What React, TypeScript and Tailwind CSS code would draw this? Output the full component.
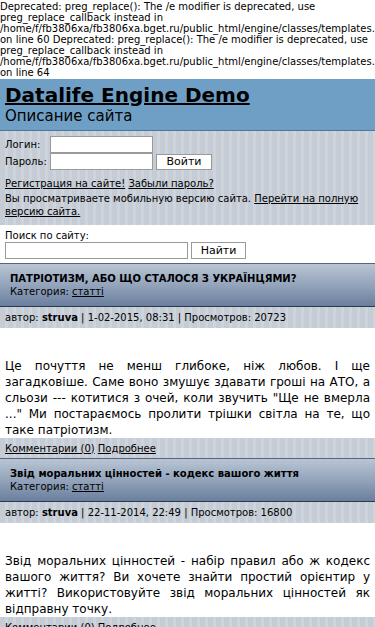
import React from "react";

const stripes =
  "bg-[repeating-linear-gradient(90deg,#c5ccd5_0px,#c5ccd5_5px,#ced4dc_5px,#ced4dc_8px)]";

function Article(props: {
  title: string;
  date: string;
  views: string;
  text: string;
}) {
  return (
    <div>
      <div className="border-t border-[#56657a] border-b border-b-[#2c3747] bg-[linear-gradient(180deg,#b9c5d4_0%,#8fa0b8_55%,#6a7f9e_100%)] px-[10px] pt-[8px] pb-[8px]">
        <div className="text-[10px] leading-[13px] font-bold">{props.title}</div>
        <div className="text-[10px] leading-[13px]">
          Категория: <a className="underline">статті</a>
        </div>
      </div>
      <div className={`${stripes} px-[5px] h-[21px] flex items-center text-[10px]`}>
        <span>
          автор: <b>struva</b> | {props.date} | Просмотров: {props.views}
        </span>
      </div>
      <div className="bg-white px-[5px] pt-[30px] pb-0">
        <p className="text-[12px] leading-[16px] text-justify">{props.text}</p>
      </div>
      <div className={`${stripes} px-[5px] h-[20px] flex items-center text-[10px]`}>
        <a className="underline">Комментарии (0)</a>
        <span>&nbsp;</span>
        <a className="underline">Подробнее</a>
      </div>
    </div>
  );
}

export default function App() {
  return (
    <div className="w-[375px] h-[627px] overflow-hidden bg-white text-black font-['DejaVu_Sans',sans-serif]">
      <div className="text-[10px] leading-[11px] whitespace-normal pt-[1px]">
        Deprecated: preg_replace(): The /e modifier is deprecated, use preg_replace_callback instead in /home/f/fb3806xa/fb3806xa.bget.ru/public_html/engine/classes/templates.class.php on line 60 Deprecated: preg_replace(): The /e modifier is deprecated, use preg_replace_callback instead in /home/f/fb3806xa/fb3806xa.bget.ru/public_html/engine/classes/templates.class.php on line 64
      </div>
      <div className="bg-[#6f9fc5] border-b border-[#4b789c] px-[5px] pt-[4px] pb-[4px] mt-[1px]">
        <div className="text-[20px] leading-[24px] font-bold underline">Datalife Engine Demo</div>
        <div className="text-[15px] leading-[19px]">Описание сайта</div>
      </div>
      <div className={`${stripes} px-[5px] pt-[5px] pb-[7px] text-[10px]`}>
        <div className="flex items-center h-[17px]">
          <span className="w-[45px]">Логин:</span>
          <input className="w-[103px] h-[17px] bg-white border border-[#9a9a9a]" />
        </div>
        <div className="flex items-center h-[17px]">
          <span className="w-[45px]">Пароль:</span>
          <input className="w-[103px] h-[17px] bg-white border border-[#9a9a9a]" />
          <button className="ml-[3px] w-[56px] h-[16px] bg-white border border-[#9a9a9a] text-[11px] leading-[14px]">
            Войти
          </button>
        </div>
        <div className="mt-[7px] leading-[13px]">
          <a className="underline">Регистрация на сайте!</a> <a className="underline">Забыли пароль?</a>
        </div>
        <div className="mt-[2px] leading-[13px]">
          Вы просматриваете мобильную версию сайта. <a className="underline">Перейти на полную версию сайта.</a>
        </div>
      </div>
      <div className="px-[5px] pt-[5px] pb-[4px] text-[10px]">
        <div className="leading-[12px]">Поиск по сайту:</div>
        <div className="flex items-center">
          <input className="w-[183px] h-[17px] bg-white border border-[#9a9a9a]" />
          <button className="ml-[3px] w-[55px] h-[17px] bg-white border border-[#9a9a9a] text-[11px] leading-[15px]">
            Найти
          </button>
        </div>
      </div>
      <Article
        title="ПАТРІОТИЗМ, АБО ЩО СТАЛОСЯ З УКРАЇНЦЯМИ?"
        date="1-02-2015, 08:31"
        views="20723"
        text={'Це почуття не менш глибоке, ніж любов. І ще загадковіше. Саме воно змушує здавати гроші на АТО, а сльози --- котитися з очей, коли звучить "Ще не вмерла ..." Ми постараємось пролити трішки світла на те, що таке патріотизм.'}
      />
      <Article
        title="Звід моральних цінностей - кодекс вашого життя"
        date="22-11-2014, 22:49"
        views="16800"
        text="Звід моральних цінностей - набір правил або ж кодекс вашого життя? Ви хочете знайти простий орієнтир у житті? Використовуйте звід моральних цінностей як відправну точку."
      />
    </div>
  );
}
